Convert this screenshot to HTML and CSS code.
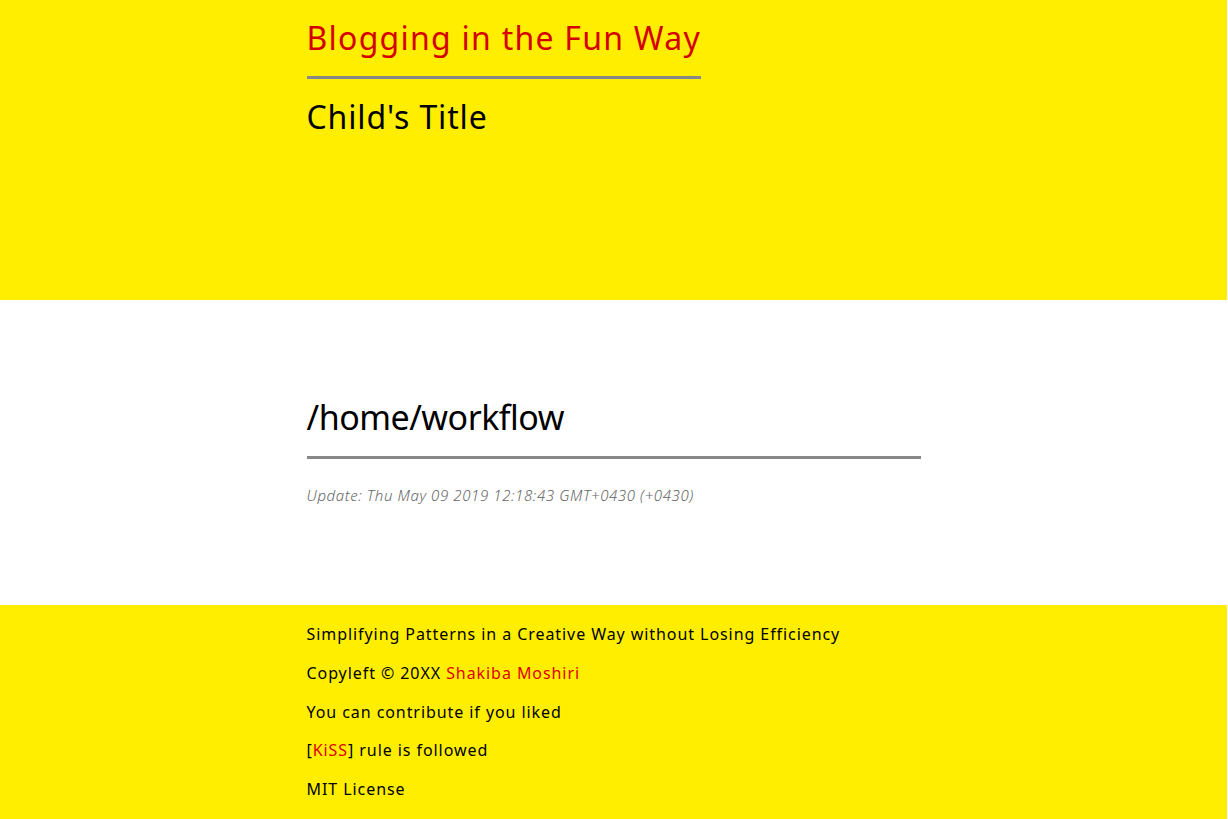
FILE: index.html
```html
<!DOCTYPE html>
<html>
<head>
<meta charset="utf-8">
<link rel="stylesheet" href="styles.css">
</head>
<body>
<header class="site-header">
  <div class="container">
    <div class="brand">
      <a class="brand-title" href="#">Blogging in the Fun Way</a>
    </div>
    <h2 class="child-title">Child's Title</h2>
  </div>
</header>
<main class="content">
  <div class="container">
    <h1 class="post-title">/home/workflow</h1>
    <p class="update">Update: Thu May 09 2019 12:18:43 GMT+0430 (+0430)</p>
  </div>
</main>
<footer class="site-footer">
  <div class="container">
    <p>Simplifying Patterns in a Creative Way without Losing Efficiency</p>
    <p>Copyleft © 20XX <a href="#">Shakiba Moshiri</a></p>
    <p>You can contribute if you liked</p>
    <p>[<a href="#">KiSS</a>] rule is followed</p>
    <p>MIT License</p>
  </div>
</footer>
</body>
</html>
```

FILE: styles.css
```css
html, body {
  margin: 0;
  padding: 0;
  background: #fff;
}
body {
  font-family: "Noto Sans", "Open Sans", sans-serif;
  color: #000;
  width: 1227px;
}
a { color: #e00000; text-decoration: none; }
.container {
  width: 614px;
  margin: 0 auto;
}
.site-header {
  background: #ffee00;
  height: 300px;
  box-sizing: border-box;
  padding-top: 14px;
}
.brand {
  display: inline-block;
  border-bottom: 3px solid #888;
  padding-bottom: 14px;
}
.brand-title {
  font-size: 32px;
  line-height: 48px;
  letter-spacing: 1.25px;
  color: #d40000;
}
.child-title {
  margin: 18px 0 0;
  font-size: 32px;
  font-weight: normal;
  line-height: 40px;
  letter-spacing: 0.85px;
}
.content {
  height: 305px;
  box-sizing: border-box;
  padding-top: 94px;
}
.post-title {
  margin: 0;
  font-size: 34px;
  font-weight: normal;
  line-height: 46px;
  letter-spacing: -0.5px;
  padding-bottom: 16px;
  border-bottom: 3px solid #888;
}
.update {
  margin: 26px 0 0;
  font-size: 15px;
  font-style: italic;
  font-weight: 300;
  letter-spacing: 0.6px;
  color: #666;
}
.site-footer {
  background: #ffee00;
  padding: 10px 0 10px;
}
.site-footer p {
  margin: 0;
  font-size: 16px;
  line-height: 38.8px;
  letter-spacing: 0.93px;
}
```
